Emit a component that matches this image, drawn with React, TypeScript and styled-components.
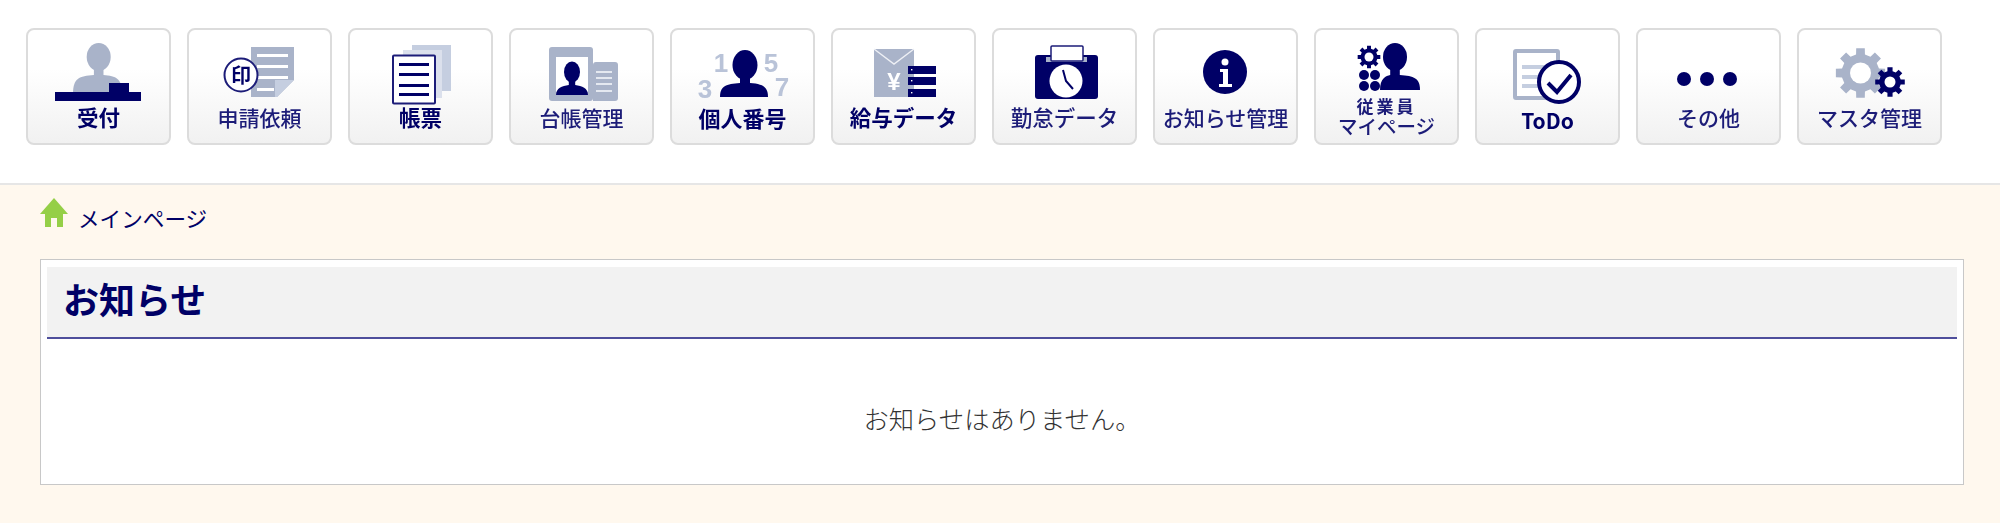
import React from "react";
import styled, { createGlobalStyle } from "styled-components";

const NAVY = "#000066";
const GREY = "#a9b3c9";
const PALE = "#c5cee0";
const FONT = `"Noto Sans CJK JP", "Noto Sans", sans-serif`;
const PAGE_BG = "#fff8ee";

const Global = createGlobalStyle`
  html, body { margin: 0; padding: 0; background: ${PAGE_BG}; }
  body { font-family: ${FONT}; height: 523px; overflow: hidden; }
`;

const Page = styled.div`
  width: 2000px;
  height: 523px;
  display: flex;
  flex-direction: column;
`;
const Header = styled.header`
  height: 185px;
  box-sizing: border-box;
  background: #fff;
  border-bottom: 2px solid #e6e6e6;
  padding: 28px 0 0 26px;
`;
const Toolbar = styled.nav`
  display: flex;
  gap: 16px;
`;
const MenuButton = styled.button`
  width: 145px;
  height: 117px;
  box-sizing: border-box;
  padding: 0;
  display: flex;
  flex-direction: column;
  align-items: center;
  border: 2px solid #dcdcdc;
  border-radius: 8px;
  background: linear-gradient(#ffffff 0%, #ffffff 35%, #f1f1f1 100%);
  font-family: ${FONT};
  color: ${NAVY};
`;
const Icon = styled.svg`
  display: block;
  width: 141px;
  height: 76px;
  flex: none;
  filter: blur(0.35px);
`;
const Label = styled.span<{ $bold?: boolean; $shift?: number; $size?: number }>`
  display: block;
  margin-top: ${(p) => p.$shift ?? 0}px;
  font-size: ${(p) => p.$size ?? (p.$bold ? 21.5 : 21)}px;
  line-height: 22px;
  font-weight: ${(p) => (p.$bold ? 700 : 500)};
  white-space: nowrap;
  color: ${(p) => (p.$bold ? NAVY : "#1c1c78")};
  filter: blur(0.3px);
`;
const LabelStack = styled.span`
  display: flex;
  flex-direction: column;
  align-items: center;
  margin-top: -10px;
  color: #1c1c78;
  filter: blur(0.3px);
  white-space: nowrap;
`;
const SmallLine = styled.span`
  display: block;
  font-size: 17px;
  line-height: 20px;
  letter-spacing: 3px;
  font-weight: 700;
`;
const WideLine = styled.span`
  display: block;
  font-size: 19.5px;
  line-height: 20px;
  font-weight: 500;
`;
const Main = styled.main`
  flex: 1;
  background: ${PAGE_BG};
  padding: 13px 36px 0 40px;
`;
const Breadcrumb = styled.div`
  display: flex;
  align-items: flex-start;
  gap: 10px;
  height: 61px;
  font-size: 21.6px;
  line-height: 30px;
  color: ${NAVY};
`;
const BreadText = styled.span`
  margin-top: 5px;
`;
const Panel = styled.section`
  box-sizing: border-box;
  height: 226px;
  background: #fff;
  border: 1px solid #c8c8c8;
  padding: 7px 6px 0;
`;
const PanelHead = styled.div`
  height: 72px;
  box-sizing: border-box;
  background: #f2f2f2;
  border-bottom: 2px solid #4f4f9c;
  padding: 0 0 8px 16px;
  display: flex;
  align-items: center;
`;
const Title = styled.h2`
  margin: 0;
  font-size: 36px;
  line-height: 48px;
  font-weight: 700;
  color: ${NAVY};
`;
const Message = styled.p`
  margin: 62px 0 0;
  text-align: center;
  font-size: 25.3px;
  line-height: 34px;
  font-weight: 300;
  color: #333;
`;

function gear(cx: number, cy: number, R: number, r: number, n: number) {
  const pts: string[] = [];
  const step = (Math.PI * 2) / n;
  for (let i = 0; i < n; i++) {
    const a = i * step - Math.PI / 2;
    const w = step * 0.22;
    const w2 = step * 0.3;
    const add = (rad: number, ang: number) =>
      pts.push(`${(cx + rad * Math.cos(ang)).toFixed(2)},${(cy + rad * Math.sin(ang)).toFixed(2)}`);
    add(r, a - w2);
    add(R, a - w);
    add(R, a + w);
    add(r, a + w2);
  }
  return pts.join(" ");
}

const Person = ({ cx, cy, rx, ry, left, right, top, bottom, fill }: any) => (
  <g fill={fill}>
    <ellipse cx={cx} cy={cy} rx={rx} ry={ry} />
    <rect x={cx - rx * 0.4} y={cy + ry - 3} width={rx * 0.8} height={top - cy - ry + 8} />
    <path
      d={`M${left} ${bottom} C${left} ${top + 2} ${left + 6} ${top} ${cx - rx * 0.4} ${top - 1} L${cx + rx * 0.4} ${top - 1} C${right - 6} ${top} ${right} ${top + 2} ${right} ${bottom} Z`}
    />
  </g>
);

const VB = "2 2 141 76";

const items: {
  key: string;
  label?: string;
  bold?: boolean;
  shift?: number;
  size?: number;
  two?: boolean;
  icon: React.ReactNode;
}[] = [
  {
    key: "受付",
    label: "受付",
    bold: true,
    icon: (
      <>
        <Person cx={72.7} cy={29} rx={12} ry={14} left={47} right={96} top={48} bottom={66} fill={GREY} />
        <rect x={29} y={64} width={86} height={9} fill={NAVY} />
        <rect x={83} y={55} width={20} height={9} fill={NAVY} />
      </>
    ),
  },
  {
    key: "申請依頼",
    label: "申請依頼",
    icon: (
      <>
        <polygon points="64,19 107,19 107,52 90,69 64,69" fill={GREY} />
        <g fill="#fff">
          <rect x={70} y={26} width={31} height={3} />
          <rect x={70} y={37} width={31} height={3} />
          <rect x={70} y={48} width={31} height={3} />
          <rect x={70} y={60} width={17} height={3} />
        </g>
        <polygon points="88,52 107,52 90,69 88,69" fill={PALE} />
        <circle cx={54} cy={47} r={16.5} fill="#fff" stroke="#1c1c78" strokeWidth={2} />
        <text x={54} y={54.5} textAnchor="middle" fontSize={20} fontWeight={700} fill={NAVY} fontFamily={FONT}>
          印
        </text>
      </>
    ),
  },
  {
    key: "帳票",
    label: "帳票",
    bold: true,
    icon: (
      <>
        <rect x={64} y={17} width={39} height={46} fill={PALE} />
        <rect x={55} y={22} width={39} height={48} fill="#dbe0ec" />
        <rect x={45} y={27.5} width={42} height={48} fill="#fff" stroke="#1c1c78" strokeWidth={2} rx={1} />
        <g fill={NAVY}>
          <rect x={51} y={35} width={30} height={3} />
          <rect x={51} y={45} width={30} height={3} />
          <rect x={51} y={56} width={30} height={3} />
          <rect x={51} y={65} width={30} height={3} />
        </g>
      </>
    ),
  },
  {
    key: "台帳管理",
    label: "台帳管理",
    icon: (
      <>
        <rect x={84} y={34} width={25} height={39} rx={3} fill={GREY} />
        <rect x={40} y={19} width={44} height={54} rx={3} fill={GREY} />
        <rect x={84} y={46} width={3} height={27} fill={GREY} />
        <rect x={47} y={29} width={32} height={38} fill="#fff" />
        <Person cx={63} cy={44} rx={8} ry={10.5} left={47} right={79} top={58} bottom={67} fill={NAVY} />
        <g fill="#e4e8f0">
          <rect x={87} y={43} width={16} height={2} />
          <rect x={87} y={49} width={16} height={2} />
          <rect x={87} y={55} width={16} height={2} />
          <rect x={87} y={62} width={16} height={2} />
        </g>
      </>
    ),
  },
  {
    key: "個人番号",
    label: "個人番号",
    bold: true,
    size: 22,
    icon: (
      <>
        <Person cx={75} cy={37} rx={12.5} ry={15} left={50} right={98} top={56} bottom={69} fill={NAVY} />
        <g fontSize={26} fontWeight={700} fill="#b9c3d8" fontFamily={`"Liberation Sans", sans-serif`} textAnchor="middle">
          <text x={51} y={44}>1</text>
          <text x={101} y={44}>5</text>
          <text x={35} y={70}>3</text>
          <text x={112} y={68}>7</text>
        </g>
      </>
    ),
  },
  {
    key: "給与データ",
    label: "給与データ",
    bold: true,
    icon: (
      <>
        <rect x={43} y={21} width={40} height={48} fill={GREY} />
        <polyline points="43,21 63,36 83,21" fill="none" stroke="#eef0f5" strokeWidth={1.4} />
        <text x={63} y={62} textAnchor="middle" fontSize={24} fontWeight={700} fill="#fff" fontFamily={`"Liberation Sans", sans-serif`}>
          ¥
        </text>
        <g fill={NAVY}>
          <rect x={77} y={38} width={28} height={8} />
          <rect x={77} y={49} width={28} height={8} />
          <rect x={77} y={61} width={28} height={8} />
        </g>
        <g fill="#fff">
          <rect x={80} y={41} width={1.4} height={1.4} />
          <rect x={80} y={52} width={1.4} height={1.4} />
          <rect x={80} y={64} width={1.4} height={1.4} />
        </g>
      </>
    ),
  },
  {
    key: "勤怠データ",
    label: "勤怠データ",
    size: 21.5,
    icon: (
      <>
        <rect x={43} y={27} width={63} height={44} rx={3} fill={NAVY} />
        <rect x={54} y={29} width={41} height={5} fill={GREY} />
        <rect x={59} y={18} width={32} height={15} rx={1} fill="#fff" stroke="#1c1c78" strokeWidth={1.5} />
        <circle cx={74} cy={53} r={16.5} fill="#fff" />
        <polyline points="71,42 74,53 81,61" fill="none" stroke={NAVY} strokeWidth={2} />
      </>
    ),
  },
  {
    key: "お知らせ管理",
    label: "お知らせ管理",
    icon: (
      <>
        <circle cx={72} cy={44} r={22} fill={NAVY} />
        <circle cx={72} cy={34} r={3.5} fill="#fff" />
        <path d="M67 41 H75 V56 H79 V59 H66 V56 H70 V44 H67 Z" fill="#fff" />
      </>
    ),
  },
  {
    key: "従業員",
    two: true,
    icon: (
      <>
        <polygon points={gear(55, 29, 11.5, 8.5, 8)} fill={NAVY} />
        <circle cx={55} cy={29} r={4.5} fill="#fff" />
        <g fill={NAVY}>
          <circle cx={50} cy={47} r={5} />
          <circle cx={61} cy={47} r={5} />
          <circle cx={50} cy={58} r={5} />
          <circle cx={61} cy={58} r={5} />
        </g>
        <Person cx={81} cy={29} rx={12} ry={14} left={66} right={106} top={48} bottom={62} fill={NAVY} />
      </>
    ),
  },
  {
    key: "ToDo",
    label: "ToDo",
    bold: true,
    shift: 3,
    size: 21,
    icon: (
      <>
        <rect x={40} y={23} width={43} height={47} rx={1} fill="#fff" stroke={GREY} strokeWidth={4} />
        <g fill={PALE}>
          <rect x={47} y={37} width={24} height={4} />
          <rect x={47} y={47} width={24} height={4} />
          <rect x={47} y={56} width={24} height={4} />
        </g>
        <circle cx={84} cy={54} r={20} fill="#fff" stroke={NAVY} strokeWidth={4} />
        <polyline points="73,55 82,64 96,47" fill="none" stroke={NAVY} strokeWidth={4} />
      </>
    ),
  },
  {
    key: "その他",
    label: "その他",
    icon: (
      <g fill={NAVY}>
        <circle cx={48} cy={51} r={7} />
        <circle cx={71} cy={51} r={7} />
        <circle cx={94} cy={51} r={7} />
      </g>
    ),
  },
  {
    key: "マスタ管理",
    label: "マスタ管理",
    icon: (
      <>
        <polygon points={gear(63.5, 45, 25, 19, 8)} fill={GREY} />
        <circle cx={63.5} cy={45} r={10.5} fill="#fff" />
        <polygon points={gear(93, 54, 15, 11, 8)} fill={NAVY} />
        <circle cx={93} cy={54} r={5.5} fill="#fff" />
      </>
    ),
  },
];

const House = styled.svg`
  width: 28px;
  height: 30px;
  flex: none;
`;

export default function App() {
  return (
    <Page>
      <Global />
      <Header>
        <Toolbar>
          {items.map((it) => (
            <MenuButton key={it.key}>
              <Icon viewBox={VB}>{it.icon}</Icon>
              {it.two ? (
                <LabelStack>
                  <SmallLine>従業員</SmallLine>
                  <WideLine>マイページ</WideLine>
                </LabelStack>
              ) : (
                <Label $bold={it.bold} $shift={it.shift} $size={it.size}>
                  {it.label}
                </Label>
              )}
            </MenuButton>
          ))}
        </Toolbar>
      </Header>
      <Main>
        <Breadcrumb>
          <House viewBox="0 0 28 30">
            <path d="M14 0 L28 16 H23 V29 H17 V20 H11 V29 H5 V16 H0 Z" fill="#95cf47" />
          </House>
          <BreadText>メインページ</BreadText>
        </Breadcrumb>
        <Panel>
          <PanelHead>
            <Title>お知らせ</Title>
          </PanelHead>
          <Message>お知らせはありません。</Message>
        </Panel>
      </Main>
    </Page>
  );
}
